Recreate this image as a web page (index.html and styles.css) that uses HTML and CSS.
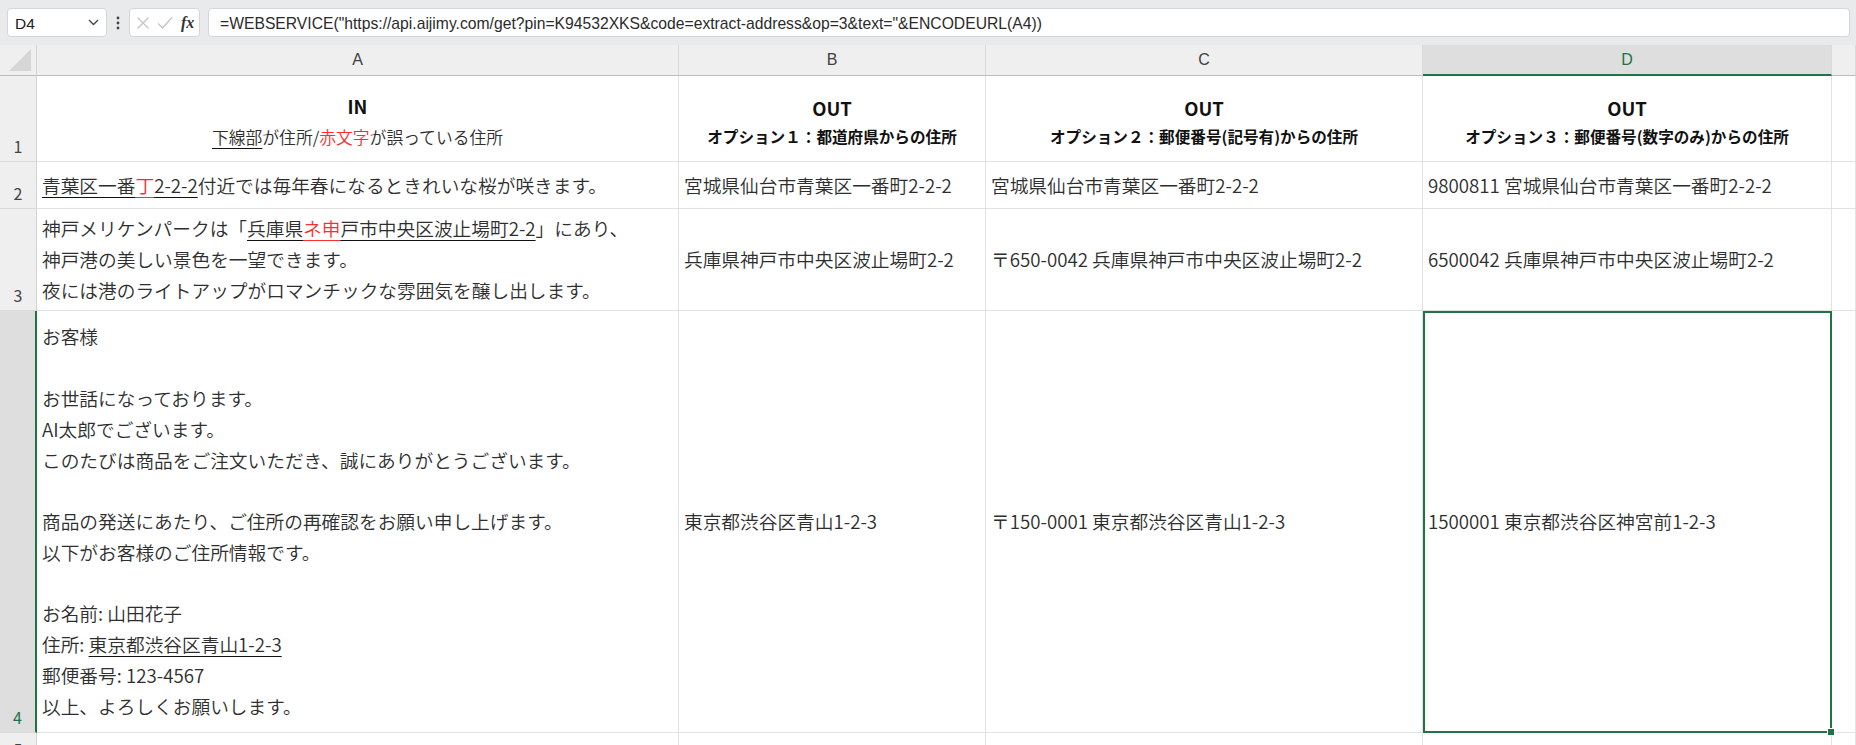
FILE: index.html
```html
<!DOCTYPE html>
<html lang="ja">
<head>
<meta charset="utf-8">
<title>Sheet</title>
<link rel="stylesheet" href="styles.css">
</head>
<body>
<div class="app">
  <div class="toolbar">
    <div class="namebox">
      <span class="nb-text">D4</span>
      <svg class="chev" width="11" height="7" viewBox="0 0 11 7"><polyline points="1,1 5.5,5.5 10,1" fill="none" stroke="#444" stroke-width="1.3"/></svg>
    </div>
    <div class="dots">
      <svg width="4" height="14" viewBox="0 0 4 14"><circle cx="2" cy="2" r="1.4" fill="#444"/><circle cx="2" cy="7" r="1.4" fill="#444"/><circle cx="2" cy="12" r="1.4" fill="#444"/></svg>
    </div>
    <div class="fxbox">
      <svg width="14" height="14" viewBox="0 0 14 14"><path d="M1.5 1.5 L12.5 12.5 M12.5 1.5 L1.5 12.5" stroke="#c4c4c4" stroke-width="1.3" fill="none"/></svg>
      <svg width="16" height="14" viewBox="0 0 16 14"><polyline points="1,7.5 5.5,12 15,1.5" stroke="#c4c4c4" stroke-width="1.3" fill="none"/></svg>
      <span class="fx">fx</span>
    </div>
    <div class="formula">=WEBSERVICE("https://api.aijimy.com/get?pin=K94532XKS&amp;code=extract-address&amp;op=3&amp;text="&amp;ENCODEURL(A4))</div>
  </div>

  <div class="sheet">
    <!-- column headers -->
    <div class="corner">
      <svg width="26" height="26" viewBox="0 0 26 26"><polygon points="24,2 24,24 2,24" fill="#d6d6d6"/></svg>
    </div>
    <div class="colh">A</div>
    <div class="colh">B</div>
    <div class="colh">C</div>
    <div class="colh colh-sel">D</div>
    <div class="colh"></div>

    <!-- row 1 -->
    <div class="rowh">1</div>
    <div class="cell head">
      <div class="big">IN</div>
      <div class="sub sub-a"><span class="ul">下線部</span>が住所/<span class="red">赤文字</span>が誤っている住所</div>
    </div>
    <div class="cell head">
      <div class="big">OUT</div>
      <div class="sub sub-b">オプション１：都道府県からの住所</div>
    </div>
    <div class="cell head">
      <div class="big">OUT</div>
      <div class="sub sub-b">オプション２：郵便番号(記号有)からの住所</div>
    </div>
    <div class="cell head">
      <div class="big">OUT</div>
      <div class="sub sub-b">オプション３：郵便番号(数字のみ)からの住所</div>
    </div>
    <div class="cell"></div>

    <!-- row 2 -->
    <div class="rowh">2</div>
    <div class="cell text"><div><span class="ul">青葉区一番<span class="red">丁</span>2-2-2</span>付近では毎年春になるときれいな桜が咲きます。</div></div>
    <div class="cell text"><div>宮城県仙台市青葉区一番町2-2-2</div></div>
    <div class="cell text"><div>宮城県仙台市青葉区一番町2-2-2</div></div>
    <div class="cell text"><div>9800811 宮城県仙台市青葉区一番町2-2-2</div></div>
    <div class="cell"></div>

    <!-- row 3 -->
    <div class="rowh">3</div>
    <div class="cell text"><div>神戸メリケンパークは「<span class="ul">兵庫県<span class="red">ネ申</span>戸市中央区波止場町2-2</span>」にあり、<br>神戸港の美しい景色を一望できます。<br>夜には港のライトアップがロマンチックな雰囲気を醸し出します。</div></div>
    <div class="cell text"><div>兵庫県神戸市中央区波止場町2-2</div></div>
    <div class="cell text"><div>〒650-0042 兵庫県神戸市中央区波止場町2-2</div></div>
    <div class="cell text"><div>6500042 兵庫県神戸市中央区波止場町2-2</div></div>
    <div class="cell"></div>

    <!-- row 4 -->
    <div class="rowh rowh-sel">4</div>
    <div class="cell text"><div>お客様<br><br>お世話になっております。<br>AI太郎でございます。<br>このたびは商品をご注文いただき、誠にありがとうございます。<br><br>商品の発送にあたり、ご住所の再確認をお願い申し上げます。<br>以下がお客様のご住所情報です。<br><br>お名前: 山田花子<br>住所: <span class="ul">東京都渋谷区青山1-2-3</span><br>郵便番号: 123-4567<br>以上、よろしくお願いします。</div></div>
    <div class="cell text"><div>東京都渋谷区青山1-2-3</div></div>
    <div class="cell text"><div>〒150-0001 東京都渋谷区青山1-2-3</div></div>
    <div class="cell text selected"><div>1500001 東京都渋谷区神宮前1-2-3</div><span class="handle"></span></div>
    <div class="cell"></div>

    <!-- row 5 -->
    <div class="rowh">5</div>
    <div class="cell"></div>
    <div class="cell"></div>
    <div class="cell"></div>
    <div class="cell"></div>
    <div class="cell"></div>
  </div>
</div>
</body>
</html>
```

FILE: styles.css
```css
html, body {
  margin: 0;
  padding: 0;
  background: #ffffff;
}
body {
  width: 1856px;
  height: 745px;
  overflow: hidden;
  font-family: "Noto Sans CJK JP", "Noto Sans", sans-serif;
}
.app {
  display: flex;
  flex-direction: column;
}

/* toolbar */
.toolbar {
  height: 45px;
  box-sizing: border-box;
  background: #e9eaec;
  display: flex;
  align-items: flex-start;
  padding-top: 8px;
}
.namebox {
  margin-left: 7px;
  width: 100px;
  height: 29px;
  box-sizing: border-box;
  background: #ffffff;
  border: 1px solid #d6d6d6;
  border-radius: 4px;
  display: flex;
  align-items: center;
  justify-content: space-between;
  padding: 2px 7px 0 7px;
  font-family: "Liberation Sans", sans-serif;
  font-size: 15.5px;
  color: #222;
}
.chev {
  margin-top: -2px;
}
.dots {
  width: 22px;
  height: 29px;
  display: flex;
  align-items: center;
  justify-content: center;
}
.fxbox {
  width: 71px;
  height: 29px;
  box-sizing: border-box;
  background: #ffffff;
  border: 1px solid #d6d6d6;
  border-radius: 4px;
  display: flex;
  align-items: center;
  gap: 7px;
  padding-left: 6px;
}
.fx {
  font-family: "Liberation Serif", serif;
  font-style: italic;
  font-weight: bold;
  font-size: 16px;
  color: #333;
  margin-left: 1px;
}
.formula {
  margin-left: 8px;
  margin-right: 6px;
  flex: 1;
  height: 29px;
  box-sizing: border-box;
  background: #ffffff;
  border: 1px solid #d6d6d6;
  border-radius: 4px;
  padding: 2px 0 0 11px;
  font-family: "Liberation Sans", sans-serif;
  font-size: 15.7px;
  line-height: 25px;
  color: #2b2b2b;
  white-space: nowrap;
}

/* grid */
.sheet {
  display: grid;
  grid-template-columns: 37px 642px 307px 437px 409px 24px;
  grid-template-rows: 31px 86px 47px 102px 422px 32px;
}
.corner {
  background: #efefef;
  border-right: 1px solid #d4d4d4;
  border-bottom: 1px solid #bdbdbd;
  box-sizing: border-box;
  display: flex;
  align-items: flex-end;
  justify-content: flex-end;
  padding: 0 3px 2px 0;
}
.colh {
  background: #efefef;
  border-right: 1px solid #dadada;
  border-bottom: 1px solid #bdbdbd;
  box-sizing: border-box;
  display: flex;
  align-items: center;
  justify-content: center;
  font-family: "Liberation Sans", sans-serif;
  font-size: 16px;
  color: #404040;
}
.colh-sel {
  background: #dedede;
  color: #217346;
  border-bottom: 2px solid #217346;
}
.rowh {
  background: #efefef;
  border-right: 1px solid #d4d4d4;
  border-bottom: 1px solid #dadada;
  box-sizing: border-box;
  display: flex;
  align-items: flex-end;
  justify-content: center;
  padding-bottom: 6px;
  font-family: "Noto Sans CJK JP", sans-serif;
  font-size: 16px;
  line-height: 18px;
  color: #444;
}
.rowh-sel {
  background: #dedede;
  color: #217346;
  border-right: 2px solid #217346;
}

.cell {
  border-right: 1px solid #e1e1e1;
  border-bottom: 1px solid #e1e1e1;
  box-sizing: border-box;
  position: relative;
}
.text {
  display: flex;
  align-items: center;
  padding: 0 5px;
  font-size: 18.7px;
  font-weight: 350;
  line-height: 30.8px;
  color: #2e2e2e;
  white-space: nowrap;
}
.head {
  display: flex;
  flex-direction: column;
  align-items: center;
  justify-content: center;
  padding-top: 6px;
  color: #111;
}
.big {
  font-family: "Noto Sans CJK JP", sans-serif;
  font-weight: bold;
  font-size: 18.5px;
  line-height: 28px;
}
.sub {
  line-height: 28px;
  white-space: nowrap;
}
.sub-a {
  font-size: 16.8px;
  font-weight: 350;
  margin-top: 3px;
  color: #2e2e2e;
}
.sub-b {
  font-size: 15.6px;
  font-weight: bold;
}
.ul {
  text-decoration: underline;
  text-decoration-thickness: 1px;
  text-underline-offset: 4px;
  text-decoration-color: #111;
}
.red {
  color: #ff2d2d;
}
.ul .red {
  text-decoration: underline;
  text-decoration-color: #ff2d2d;
}

/* selection */
.selected::after {
  content: "";
  position: absolute;
  top: 0;
  left: 0;
  right: -1px;
  bottom: -1px;
  border: 2px solid #217346;
  pointer-events: none;
}
.handle {
  position: absolute;
  right: -4px;
  bottom: -4px;
  width: 6px;
  height: 6px;
  background: #217346;
  border: 1px solid #ffffff;
  z-index: 2;
}
```
